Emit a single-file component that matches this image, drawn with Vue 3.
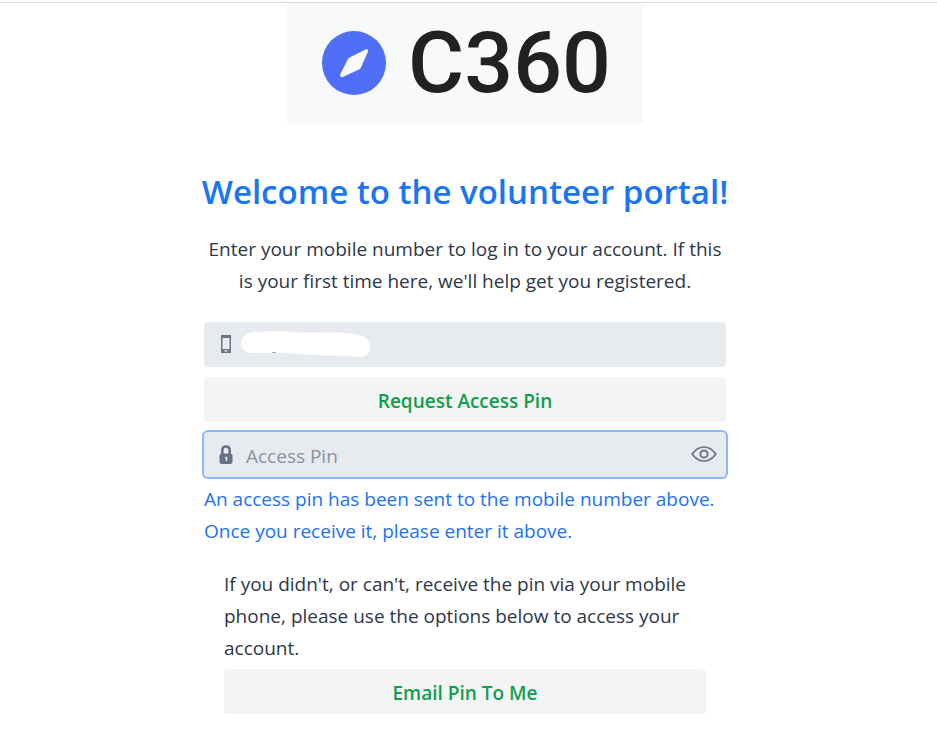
<script setup>
import { ref } from 'vue'

const mobile = ref('')
const pin = ref('')
const pinVisible = ref(false)
</script>

<template>
  <main class="page">
    <header class="logo" aria-label="C360">
      <svg class="compass" viewBox="0 0 64 64" aria-hidden="true">
        <circle cx="32" cy="32" r="32" fill="#4f6ff6" />
        <path d="M43.500 18.500 28 26.200Q26.700 26.900 26 28L18.200 43.200Q17.800 46.800 20.800 46L37 38.500Q38.300 37.900 38.900 36.600L45.800 21Q46.800 17.400 43.500 18.500Z" fill="#f8f9fb" />
      </svg>
      <span class="brand">C360</span>
    </header>

    <form class="form" @submit.prevent>
      <h1 class="title">Welcome to the volunteer portal!</h1>
      <p class="intro">Enter your mobile number to log in to your account. If this is your first time here, we'll help get you registered.</p>

      <div class="field">
        <svg class="icon" viewBox="0 0 16 20" aria-hidden="true">
          <path fill-rule="evenodd" d="M3 0H13V18H3ZM4.500 3V14H11.500V3Z" fill="#6b7786" />
          <rect x="6.500" y="15.200" width="3" height="1.500" fill="#d5dae1" />
        </svg>
        <input v-model="mobile" class="input" type="tel" aria-label="Mobile number">
        <svg class="redaction" viewBox="0 0 130 28" aria-hidden="true">
          <path d="M12 1C25 1 36 -1 51 1C70 3 95 0 112 3C123 4 129 8 129 16C129 23 124 27 117 26C104 25 92 24 78 24C58 24 45 21 30 22L11 22C-4 21-3 2 12 1Z" fill="#fff" />
          <path d="M31 21.500H35" stroke="#a7adb6" stroke-width="1" />
        </svg>
      </div>
      <button class="button" type="button">Request Access Pin</button>
      <div class="field focused">
        <svg class="icon" viewBox="0 0 16 20" aria-hidden="true">
          <path d="M4.300 10V5.500Q4.300 1.500 8 1.500T11.700 5.500V10" fill="none" stroke="#667386" stroke-width="2.600" />
          <rect x="1.500" y="8.500" width="13" height="10.500" rx="2.500" fill="#667386" />
          <path d="M7 12.500H8.500V16" fill="none" stroke="#e7eaef" stroke-width="1.500" />
        </svg>
        <input v-model="pin" class="input" :type="pinVisible ? 'text' : 'password'" aria-label="Access Pin" placeholder="Access Pin">
        <button class="eye" type="button" aria-label="Show pin" @click="pinVisible = !pinVisible">
          <svg viewBox="0 0 26 18" aria-hidden="true">
            <path d="M1.200 8Q6 1 13 1T24.800 8Q20 15 13 15T1.200 8Z" fill="none" stroke="#6b7786" stroke-width="1.700" />
            <circle cx="13" cy="8" r="3.600" fill="none" stroke="#6b7786" stroke-width="2" />
          </svg>
        </button>
      </div>
      <p class="notice">An access pin has been sent to the mobile number above. Once you receive it, please enter it above.</p>
      <section class="fallback">
        <p>If you didn't, or can't, receive the pin via your mobile phone, please use the options below to access your account.</p>
        <button class="button" type="button">Email Pin To Me</button>
      </section>
    </form>
  </main>
</template>

<style>
body {
  margin: 0;
  background: #fff;
}
</style>

<style scoped>
.page {
  box-sizing: border-box;
  margin-top: 2px;
  padding: 0 7px 24px 0;
  border-top: 1px solid #d9dbde;
  display: flex;
  flex-direction: column;
  align-items: center;
  color: #2d3748;
  font-family: "Segoe UI", "Open Sans", "Noto Sans", sans-serif;
  font-size: 19px;
  line-height: 32px;
}
.logo {
  padding: 0 32px 1px 35px;
  display: flex;
  align-items: center;
  gap: 22px;
  background: #f8f9fb;
}
.compass {
  width: 64px;
  height: 64px;
}
.brand {
  color: #212121;
  font-family: Roboto, sans-serif;
  font-size: 86px;
  font-weight: 500;
  line-height: 120px;
}
.form {
  box-sizing: border-box;
  width: 100%;
  max-width: 522px;
  margin-top: 44px;
  display: flex;
  flex-direction: column;
}
p {
  margin: 0;
}
.title {
  margin: 0;
  align-self: center;
  white-space: nowrap;
  color: #1a75f5;
  font-size: 33px;
  font-weight: 600;
  line-height: 48px;
}
.intro {
  margin: 17px 0 25px;
  text-align: center;
}
.field {
  position: relative;
  box-sizing: border-box;
  height: 45px;
  padding: 0 8px 0 14px;
  display: flex;
  align-items: center;
  gap: 12px;
  border-radius: 4px;
  background: #e7eaef;
}
.focused {
  box-shadow: 0 0 0 2px #8bb8fb;
}
.icon {
  width: 16px;
  height: 20px;
  flex: none;
}
.input {
  min-width: 0;
  flex: 1;
  padding: 2px 0 0;
  border: 0;
  outline: 0;
  background: transparent;
  color: #667386;
  font: inherit;
}
.input::placeholder {
  color: #8a929e;
  opacity: 1;
  font-weight: 500;
}
.redaction {
  position: absolute;
  left: 37px;
  top: 9px;
  width: 130px;
  height: 28px;
}
.button {
  height: 45px;
  padding: 2px 16px 0;
  border: 0;
  border-radius: 4px;
  background: #f3f4f6;
  color: #0f9f4b;
  font: inherit;
  font-weight: 600;
  cursor: pointer;
}
.field + .button {
  margin: 10px 0;
}
.eye {
  padding: 0;
  border: 0;
  background: transparent;
  display: flex;
  cursor: pointer;
}
.eye svg {
  width: 28px;
  height: 18px;
}
.notice {
  margin-top: 6px;
  color: #2471ee;
}
.fallback {
  margin-top: 21px;
  padding: 0 20px;
  display: flex;
  flex-direction: column;
  gap: 5px;
}
</style>
